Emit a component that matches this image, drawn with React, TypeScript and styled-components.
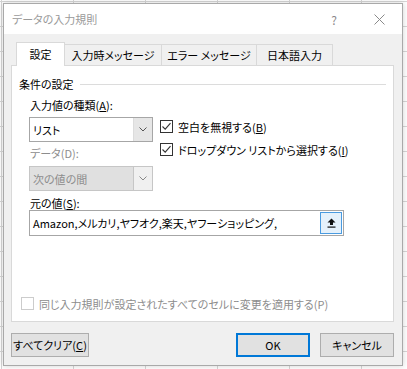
import React from 'react';
import styled, { createGlobalStyle } from 'styled-components';

const GlobalStyle = createGlobalStyle`
  html, body {
    margin: 0;
    padding: 0;
  }
  body {
    width: 407px;
    height: 369px;
    overflow: hidden;
    background-color: #fff;
    background-image:
      linear-gradient(to right, #d6d6d6 1px, transparent 1px),
      linear-gradient(to bottom, #d6d6d6 1px, transparent 1px);
    background-size: 72px 25px;
    background-position: 1px 1px;
    font-family: "Noto Sans CJK JP", "Noto Sans", sans-serif;
    font-feature-settings: "palt";
    font-size: 11px;
    color: #000;
  }
`;

const Dialog = styled.div`
  margin: 3px 0 0 3px;
  width: 400px;
  height: 363px;
  box-sizing: border-box;
  border: 1px solid #a9a9a9;
  background: #f0f0f0;
  box-shadow: 0 0 6px rgba(0, 0, 0, 0.18);
  display: flex;
  flex-direction: column;
`;

const TitleBar = styled.div`
  height: 30px;
  background: #fff;
  display: flex;
  align-items: center;
  padding-left: 8px;
  color: #9a9a9a;
`;

const TitleText = styled.div`
  flex: 1;
`;

const TitleButton = styled.div<{ $w: number }>`
  width: ${(p) => p.$w}px;
  height: 30px;
  display: flex;
  align-items: center;
  justify-content: center;
  color: #8a8a8a;
  font-size: 12px;
`;

const Body = styled.div`
  flex: 1;
  display: flex;
  flex-direction: column;
  padding: 9px 8px 8px 7px;
`;

const TabBar = styled.div`
  display: flex;
  align-items: flex-end;
  padding-left: 6px;
  height: 23px;
  position: relative;
  z-index: 1;
  margin-bottom: -1px;
`;

const Tab = styled.div<{ $active?: boolean; $w: number }>`
  width: ${(p) => p.$w}px;
  box-sizing: border-box;
  height: ${(p) => (p.$active ? 24 : 22)}px;
  display: flex;
  align-items: center;
  justify-content: center;
  background: ${(p) => (p.$active ? '#fff' : '#f0f0f0')};
  border: 1px solid #d9d9d9;
  border-bottom: ${(p) => (p.$active ? 'none' : '1px solid #d9d9d9')};
  margin-left: -1px;
  padding-bottom: ${(p) => (p.$active ? 1 : 0)}px;
  white-space: nowrap;
`;

const Panel = styled.div`
  height: 257px;
  box-sizing: border-box;
  background: #fff;
  border: 1px solid #d9d9d9;
  padding: 10px 7px 0 7px;
  display: flex;
  flex-direction: column;
`;

const GroupHeader = styled.div`
  display: flex;
  align-items: center;
  height: 16px;
  gap: 6px;
  &::after {
    content: '';
    flex: 1;
    height: 1px;
    background: #dcdcdc;
  }
`;

const Group = styled.div`
  padding-left: 10px;
  display: flex;
  flex-direction: column;
`;

const Columns = styled.div`
  display: grid;
  grid-template-columns: 124px 1fr;
  column-gap: 7px;
  margin-top: 6px;
`;

const Stack = styled.div`
  display: flex;
  flex-direction: column;
`;

const Label = styled.div<{ $disabled?: boolean; $mt?: number }>`
  height: 14px;
  line-height: 14px;
  margin-top: ${(p) => p.$mt ?? 0}px;
  padding-left: 1px;
  color: ${(p) => (p.$disabled ? '#8d8d8d' : '#000')};
  white-space: nowrap;
`;

const U = styled.span`
  text-decoration: underline;
  text-underline-offset: 1px;
`;

const Select = styled.div<{ $disabled?: boolean; $mt: number }>`
  margin-top: ${(p) => p.$mt}px;
  height: 25px;
  box-sizing: border-box;
  border: 1px solid ${(p) => (p.$disabled ? '#c6c6c6' : '#a6a6a6')};
  background: ${(p) => (p.$disabled ? '#e0e0e0' : '#fff')};
  color: ${(p) => (p.$disabled ? '#8d8d8d' : '#000')};
  display: flex;
  align-items: stretch;
`;

const SelectValue = styled.div`
  flex: 1;
  display: flex;
  align-items: center;
  padding-left: 3px;
`;

const SelectArrow = styled.div<{ $disabled?: boolean }>`
  width: 18px;
  display: flex;
  align-items: center;
  justify-content: center;
  background: ${(p) => (p.$disabled ? '#f0f0f0' : '#e6e6e6')};
  border-left: 1px solid ${(p) => (p.$disabled ? '#c6c6c6' : '#dcdcdc')};
`;

const Checks = styled.div`
  display: flex;
  flex-direction: column;
  padding-top: 22px;
  gap: 10px;
`;

const CheckRow = styled.label<{ $disabled?: boolean }>`
  display: flex;
  align-items: center;
  gap: 5px;
  height: 13px;
  color: ${(p) => (p.$disabled ? '#8d8d8d' : '#000')};
  white-space: nowrap;
`;

const Box = styled.span<{ $disabled?: boolean }>`
  width: 13px;
  height: 13px;
  box-sizing: border-box;
  border: 1px solid ${(p) => (p.$disabled ? '#cccccc' : '#333')};
  background: #fff;
  display: flex;
  align-items: center;
  justify-content: center;
  flex-shrink: 0;
`;

const SourceBox = styled.div`
  width: 315px;
  height: 26px;
  box-sizing: border-box;
  border: 1px solid #a6a6a6;
  display: flex;
  align-items: center;
  padding: 0 1px 0 3px;
`;

const SourceText = styled.div`
  flex: 1;
  white-space: nowrap;
`;

const RefButton = styled.div`
  width: 22px;
  height: 22px;
  box-sizing: border-box;
  border: 1px solid #4a9be0;
  background: #e5f1fb;
  display: flex;
  align-items: center;
  justify-content: center;
`;

const Spacer = styled.div`
  flex: 1;
`;

const ApplyRow = styled.div`
  padding: 0 0 11px 2px;
`;

const Footer = styled.div`
  display: flex;
  gap: 10px;
  margin-top: 11px;
`;

const Button = styled.div<{ $w: number; $default?: boolean }>`
  width: ${(p) => p.$w}px;
  height: 24px;
  box-sizing: border-box;
  border: 1px solid ${(p) => (p.$default ? '#0078d7' : '#adadad')};
  box-shadow: ${(p) => (p.$default ? 'inset 0 0 0 1px #0078d7' : 'none')};
  background: #e1e1e1;
  display: flex;
  align-items: center;
  justify-content: center;
  white-space: nowrap;
`;

const Chevron = ({ color }: { color: string }) => (
  <svg width="8" height="5" viewBox="0 0 8 5">
    <path d="M0.5 0.5 L4 4 L7.5 0.5" fill="none" stroke={color} strokeWidth="1" />
  </svg>
);

const Check = () => (
  <svg width="11" height="11" viewBox="0 0 11 11">
    <path d="M1.5 5.5 L4.2 8.2 L9.5 2.2" fill="none" stroke="#333" strokeWidth="1.1" />
  </svg>
);

export default function App() {
  return (
    <>
      <GlobalStyle />
      <Dialog>
        <TitleBar>
          <TitleText>データの入力規則</TitleText>
          <TitleButton $w={44}>?</TitleButton>
          <TitleButton $w={46}>
            <svg width="11" height="11" viewBox="0 0 11 11">
              <path d="M0.5 0.5 L10.5 10.5 M10.5 0.5 L0.5 10.5" stroke="#8a8a8a" strokeWidth="1" />
            </svg>
          </TitleButton>
        </TitleBar>
        <Body>
          <TabBar>
            <Tab $active $w={49}>設定</Tab>
            <Tab $w={98}>入力時メッセージ</Tab>
            <Tab $w={96}>エラー メッセージ</Tab>
            <Tab $w={77}>日本語入力</Tab>
          </TabBar>
          <Panel>
            <GroupHeader>条件の設定</GroupHeader>
            <Group>
              <Columns>
                <Stack>
                  <Label>
                    入力値の種類(<U>A</U>):
                  </Label>
                  <Select $mt={5}>
                    <SelectValue>リスト</SelectValue>
                    <SelectArrow>
                      <Chevron color="#555" />
                    </SelectArrow>
                  </Select>
                  <Label $disabled $mt={4}>
                    データ(D):
                  </Label>
                  <Select $disabled $mt={6}>
                    <SelectValue>次の値の間</SelectValue>
                    <SelectArrow $disabled>
                      <Chevron color="#888" />
                    </SelectArrow>
                  </Select>
                </Stack>
                <Checks>
                  <CheckRow>
                    <Box>
                      <Check />
                    </Box>
                    <span>
                      空白を無視する(<U>B</U>)
                    </span>
                  </CheckRow>
                  <CheckRow>
                    <Box>
                      <Check />
                    </Box>
                    <span>
                      ドロップダウン リストから選択する(<U>I</U>)
                    </span>
                  </CheckRow>
                </Checks>
              </Columns>
              <Label $mt={5}>
                元の値(<U>S</U>):
              </Label>
              <SourceBox>
                <SourceText>Amazon,メルカリ,ヤフオク,楽天,ヤフーショッピング,</SourceText>
                <RefButton>
                  <svg width="9" height="10" viewBox="0 0 9 10">
                    <path d="M4.5 0.5 L8.5 4.5 L6 4.5 L6 7 L3 7 L3 4.5 L0.5 4.5 Z" fill="#111" />
                    <rect x="0.5" y="8.5" width="8" height="1.2" fill="#111" />
                  </svg>
                </RefButton>
              </SourceBox>
            </Group>
            <Spacer />
            <ApplyRow>
              <CheckRow $disabled>
                <Box $disabled />
                <span>同じ入力規則が設定されたすべてのセルに変更を適用する(P)</span>
              </CheckRow>
            </ApplyRow>
          </Panel>
          <Footer>
            <Button $w={78}>
              <span>
                すべてクリア(<U>C</U>)
              </span>
            </Button>
            <Spacer />
            <Button $w={74} $default>
              OK
            </Button>
            <Button $w={74}>キャンセル</Button>
          </Footer>
        </Body>
      </Dialog>
    </>
  );
}
